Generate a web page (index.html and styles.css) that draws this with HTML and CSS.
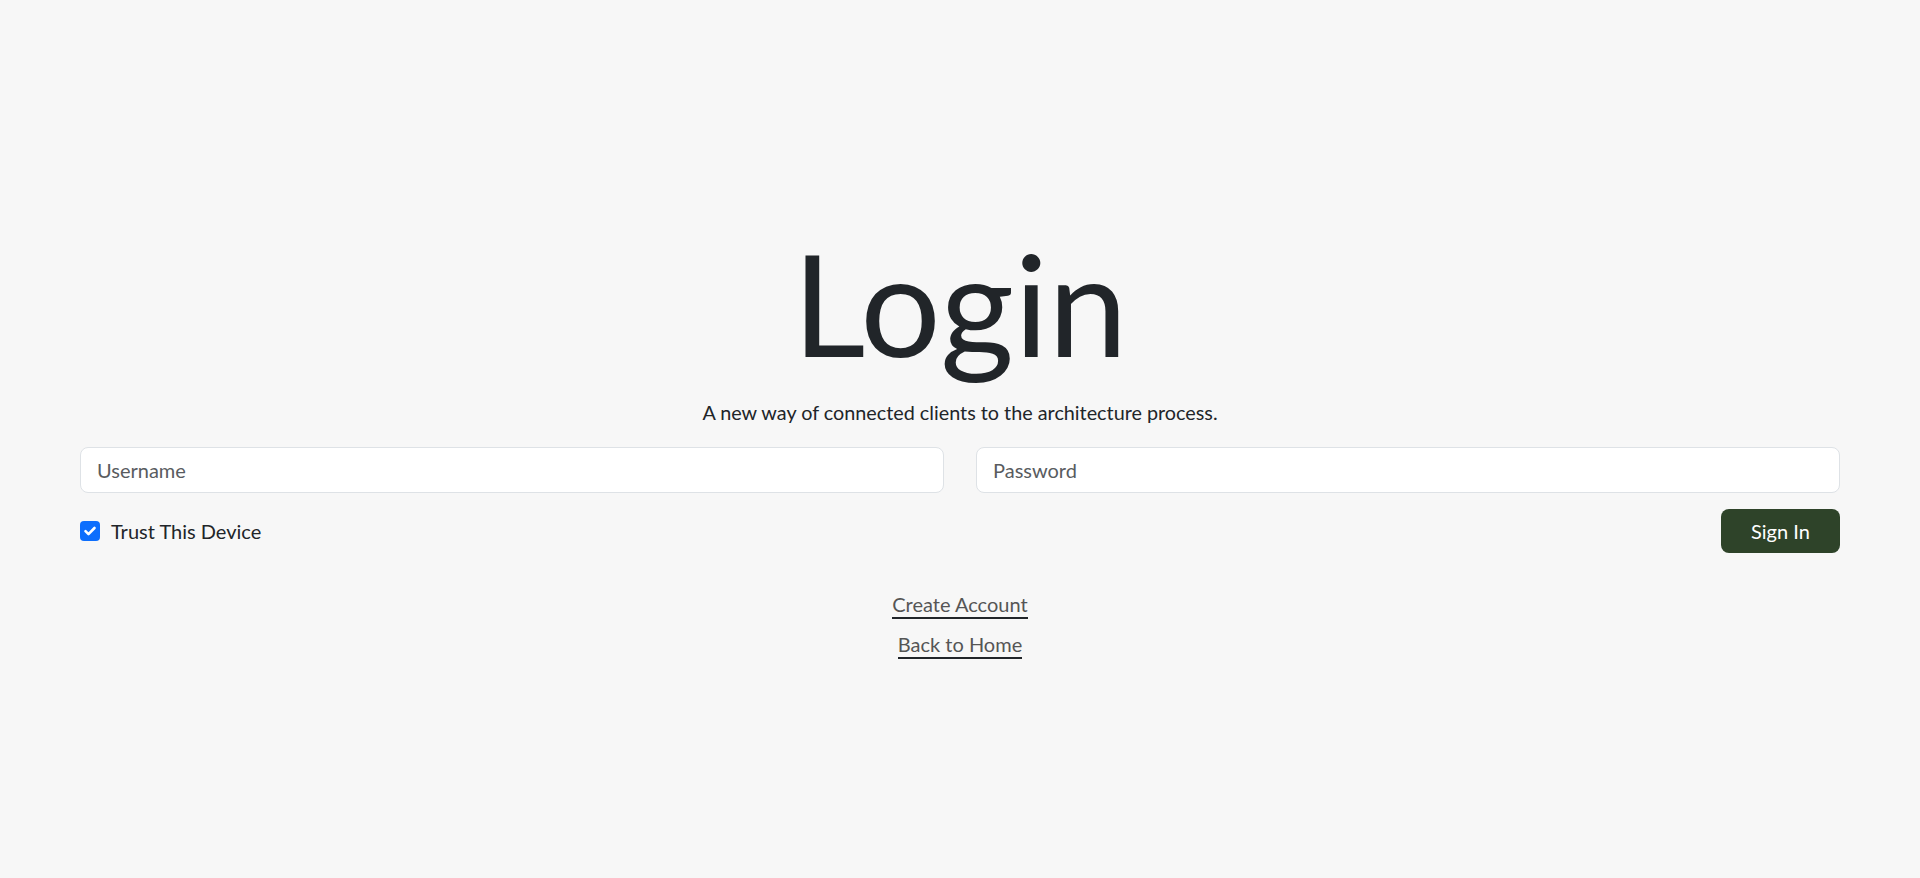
FILE: index.html
```html
<!DOCTYPE html>
<html lang="en">
<head>
<meta charset="utf-8">
<title>Login</title>
<link rel="stylesheet" href="styles.css">
</head>
<body>
<main class="page">
  <h1 class="title">Login</h1>
  <p class="subtitle">A new way of connected clients to the architecture process.</p>
  <form class="form">
    <div class="fields">
      <input class="field" type="text" placeholder="Username">
      <input class="field" type="password" placeholder="Password">
    </div>
    <div class="actions">
      <label class="trust">
        <span class="check">
          <svg viewBox="0 0 20 20" width="20" height="20"><path d="M5.5 10.2l3 3 6-6.2" fill="none" stroke="#fff" stroke-width="2.6" stroke-linecap="round" stroke-linejoin="round"/></svg>
        </span>
        <span class="trust-text">Trust This Device</span>
      </label>
      <button class="signin" type="button">Sign In</button>
    </div>
  </form>
  <nav class="links">
    <a class="link" href="#">Create Account</a>
    <a class="link" href="#">Back to Home</a>
  </nav>
</main>
</body>
</html>
```
FILE: styles.css
```css
html, body {
  margin: 0;
  padding: 0;
}
body {
  background: #f7f7f7;
  color: #212529;
  font-family: Lato, "Open Sans", sans-serif;
  height: 878px;
  overflow: hidden;
}
.page {
  padding: 217px 80px 0;
}
.title {
  margin: 0;
  font-size: 142px;
  line-height: 1.2;
  font-weight: 400;
  text-align: center;
  color: #212529;
}
.subtitle {
  margin: 10px 0 20px;
  font-size: 19.8px;
  line-height: 30px;
  text-align: center;
}
.fields {
  display: grid;
  grid-template-columns: 1fr 1fr;
  gap: 32px;
}
.field {
  box-sizing: border-box;
  height: 46px;
  width: 100%;
  border: 1px solid #dee2e6;
  border-radius: 8px;
  background: #fff;
  padding: 0 16px;
  font-family: Lato, sans-serif;
  font-size: 20px;
  color: #212529;
  outline: none;
}
.field::placeholder {
  color: #595c5f;
}
.actions {
  display: flex;
  justify-content: space-between;
  align-items: center;
  margin-top: 16px;
}
.trust {
  display: flex;
  align-items: center;
  gap: 11px;
  font-size: 20px;
  line-height: 30px;
}
.check {
  width: 20px;
  height: 20px;
  border-radius: 4px;
  background: #0d6efd;
  display: flex;
}
.signin {
  box-sizing: border-box;
  width: 119px;
  height: 44px;
  border: none;
  border-radius: 8px;
  background: #2e4329;
  color: #fff;
  font-family: Lato, sans-serif;
  font-size: 20px;
  padding: 0;
}
.links {
  display: flex;
  flex-direction: column;
  align-items: center;
  gap: 13px;
  margin-top: 39px;
}
.link {
  font-size: 20px;
  line-height: 24px;
  color: #555;
  text-decoration: none;
  border-bottom: 2px solid #212529;
  padding-bottom: 1px;
}
```
